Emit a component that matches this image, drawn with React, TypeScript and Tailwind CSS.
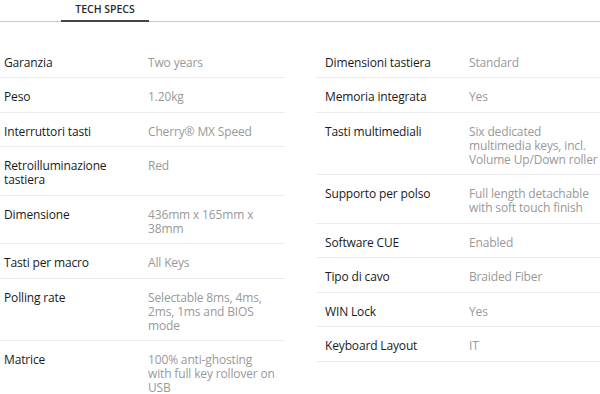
import React from 'react';

type Spec = { label: string; value: string };

// line breaks kept where the reference wraps them
const leftSpecs: Spec[] = [
  { label: 'Garanzia', value: 'Two years' },
  { label: 'Peso', value: '1.20kg' },
  { label: 'Interruttori tasti', value: 'Cherry® MX Speed' },
  { label: 'Retroilluminazione\ntastiera', value: 'Red' },
  { label: 'Dimensione', value: '436mm x 165mm x\n38mm' },
  { label: 'Tasti per macro', value: 'All Keys' },
  { label: 'Polling rate', value: 'Selectable 8ms, 4ms,\n2ms, 1ms and BIOS\nmode' },
  { label: 'Matrice', value: '100% anti-ghosting\nwith full key rollover on\nUSB' },
];

const rightSpecs: Spec[] = [
  { label: 'Dimensioni tastiera', value: 'Standard' },
  { label: 'Memoria integrata', value: 'Yes' },
  { label: 'Tasti multimediali', value: 'Six dedicated\nmultimedia keys, incl.\nVolume Up/Down roller' },
  { label: 'Supporto per polso', value: 'Full length detachable\nwith soft touch finish' },
  { label: 'Software CUE', value: 'Enabled' },
  { label: 'Tipo di cavo', value: 'Braided Fiber' },
  { label: 'WIN Lock', value: 'Yes' },
  { label: 'Keyboard Layout', value: 'IT' },
];

const SpecRow: React.FC<{ spec: Spec; inset: string; last?: boolean }> = ({ spec, inset, last }) => (
  <div className={`flex pt-[12px] pb-[7.5px] whitespace-pre-line ${inset} ${last ? '' : 'border-b border-[#ececec]'}`}>
    <div className="w-[144px] shrink-0 text-[#1a1a1a]">{spec.label}</div>
    <div className="flex-1 whitespace-pre text-[#999999]">{spec.value}</div>
  </div>
);

const App: React.FC = () => {
  return (
    <div className="w-[600px] h-[394px] overflow-hidden bg-white font-['Open_Sans',sans-serif] text-[12px] leading-[14px] tracking-[-0.15px]">
      {/* Tabs */}
      <div className="flex border-b border-[#c8c8c8]">
        <div className="ml-[61px] w-[88px] h-[22px] pt-[2px] text-center text-[10.5px] font-semibold tracking-normal text-[#2a2a2a] uppercase border-b-2 border-[#454545] -mb-[1px]">
          Tech Specs
        </div>
      </div>

      {/* Spec table */}
      <div className="flex mt-[21.5px]">
        <div className="w-[285px]">
          {leftSpecs.map((s, i) => (
            <SpecRow key={s.label} spec={s} inset="pl-[4px]" last={i === leftSpecs.length - 1} />
          ))}
        </div>
        <div className="w-[284px] ml-[31px]">
          {rightSpecs.map((s) => (
            <SpecRow key={s.label} spec={s} inset="pl-[9px]" />
          ))}
        </div>
      </div>
    </div>
  );
};

export default App;
